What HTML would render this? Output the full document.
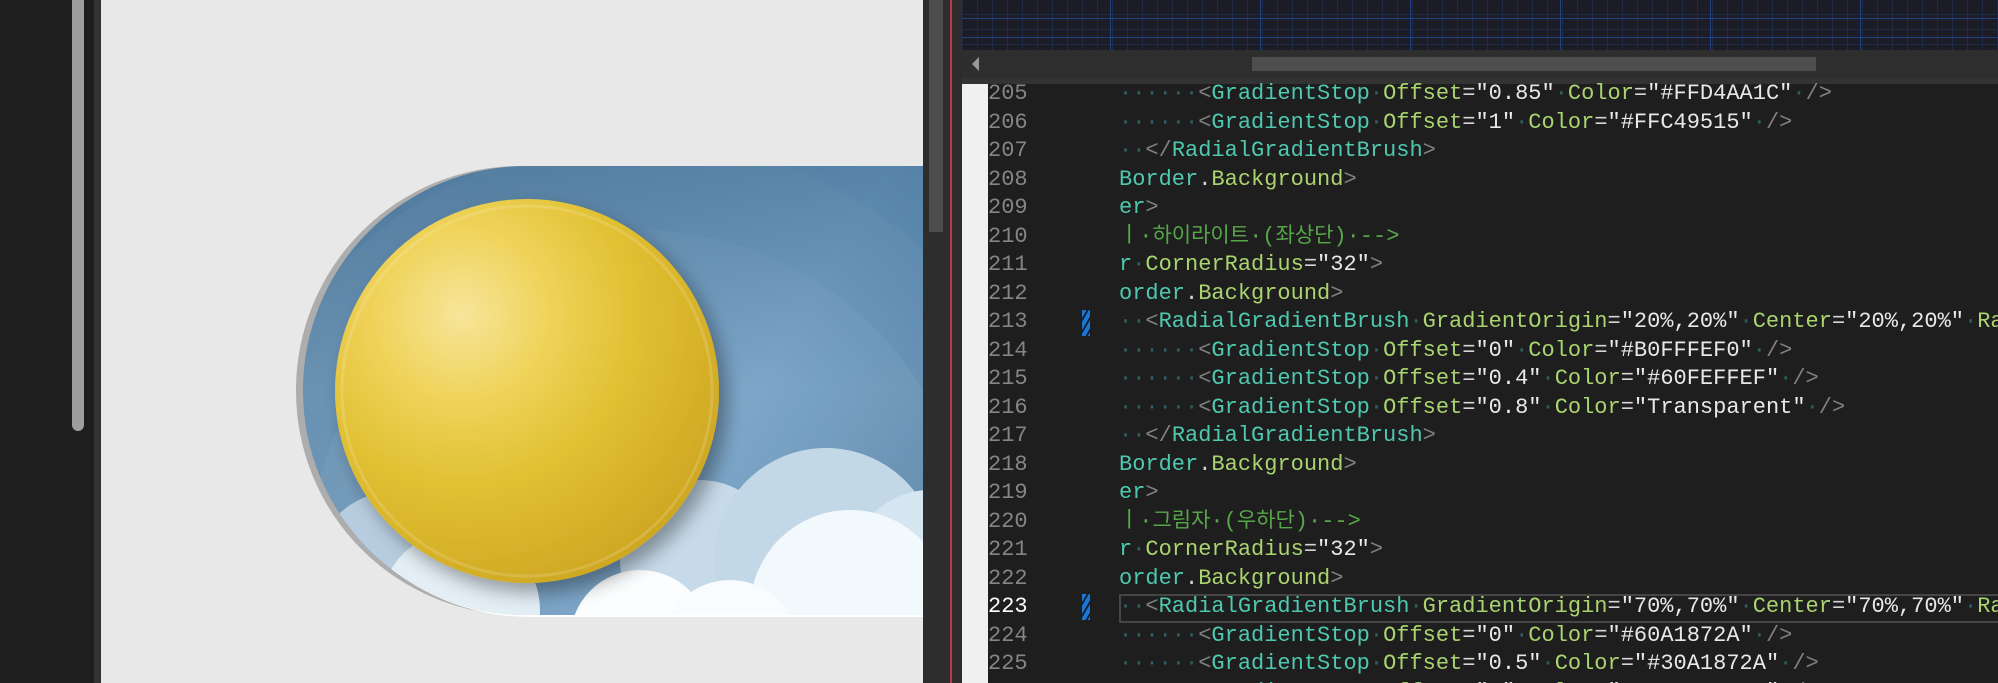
<!DOCTYPE html>
<html><head><meta charset="utf-8"><style>
*{margin:0;padding:0;box-sizing:border-box}
html,body{width:1998px;height:683px;overflow:hidden}
body{background:#1e1e1e;position:relative;font-family:"Liberation Mono","Noto Sans CJK KR",monospace}
.a{position:absolute}
.code{position:absolute;left:1119px;top:80px;font-size:22px;color:#d4d4d4}
.code div,.ln div{height:28.5px;line-height:28.5px;white-space:pre}
.ln{position:absolute;left:988px;top:80px;font-size:22px;color:#858585}
.d{color:#2c6165}.t{color:#4ec9b0}.at{color:#a9d46f}.p{color:#808080}.s{color:#e8e8e8}.c{color:#57a64a}
.k{font-family:"Noto Sans CJK KR",sans-serif;font-size:21px;line-height:1}
</style></head><body>
<div class="a" style="left:0;top:0;width:94px;height:683px;background:#1e1e1e"></div>
<div class="a" style="left:72px;top:0;width:12px;height:431px;background:#9e9e9e;border-radius:0 0 6px 6px"></div>
<div class="a" style="left:94px;top:0;width:7px;height:683px;background:#333"></div>
<div class="a" style="left:101px;top:0;width:822px;height:683px;background:#e8e8e8"></div>
<svg class="a" style="left:0;top:0" width="923" height="683">
<defs>
<linearGradient id="bg" x1="0" y1="0" x2="1" y2="0.3">
<stop offset="0" stop-color="#5e87a8"/><stop offset="0.6" stop-color="#6f9dc3"/><stop offset="1" stop-color="#4a7699"/></linearGradient>
<linearGradient id="tp" x1="0" y1="0" x2="0" y2="1"><stop offset="0" stop-color="#3f6a8d" stop-opacity=".5"/><stop offset="0.5" stop-color="#3f6a8d" stop-opacity="0"/></linearGradient>
<radialGradient id="sun" cx="0.33" cy="0.3" r="0.75">
<stop offset="0" stop-color="#f7e59a"/><stop offset="0.3" stop-color="#efd35a"/><stop offset="0.6" stop-color="#e1c032"/><stop offset="1" stop-color="#cfa823"/></radialGradient>
<clipPath id="cl"><rect x="303" y="166" width="900" height="449" rx="224" ry="224"/></clipPath>
<filter id="sh" x="-20%" y="-20%" width="150%" height="150%"><feDropShadow dx="8" dy="10" stdDeviation="9" flood-color="#000" flood-opacity=".35"/></filter>
</defs>
<rect x="296" y="166" width="900" height="449" rx="224" ry="224" fill="#adadad"/>
<rect x="306" y="170" width="900" height="447" rx="224" ry="224" fill="#fff"/>
<g clip-path="url(#cl)">
<rect x="303" y="166" width="900" height="449" fill="url(#bg)"/>
<circle cx="640" cy="560" r="420" fill="#fff" opacity=".05"/>
<circle cx="640" cy="560" r="330" fill="#fff" opacity=".05"/>
<rect x="303" y="166" width="900" height="449" fill="url(#tp)"/>
<circle cx="400" cy="580" r="90" fill="#b7cddf"/>
<circle cx="700" cy="560" r="80" fill="#c6dae9"/>
<circle cx="826" cy="560" r="112" fill="#c3d8e7"/>
<circle cx="930" cy="570" r="80" fill="#d5e6f0"/>
<circle cx="850" cy="610" r="100" fill="#f2f9fc"/>
<circle cx="460" cy="610" r="80" fill="#e3eef5"/>
<circle cx="640" cy="640" r="70" fill="#fbfdfe"/>
<circle cx="730" cy="650" r="70" fill="#f8fcfe"/>
</g>
<circle cx="527" cy="391" r="192" fill="url(#sun)" filter="url(#sh)"/>
<circle cx="527" cy="391" r="185" fill="none" stroke="#fff" stroke-opacity=".15" stroke-width="3"/>
</svg>
<div class="a" style="left:923px;top:0;width:39px;height:683px;background:#2d2d2d"></div>
<div class="a" style="left:929px;top:0;width:14px;height:232px;background:#4d4d4d"></div>
<div class="a" style="left:950px;top:0;width:2px;height:683px;background:#b9384a"></div>
<div class="a" style="left:962px;top:0;width:1036px;height:50px;background-color:#1b1c26;background-image:linear-gradient(90deg,#23407f 1px,transparent 1px),linear-gradient(0deg,#23407f 1px,transparent 1px),linear-gradient(90deg,#1f2a45 1px,transparent 1px),linear-gradient(0deg,#1f2a45 1px,transparent 1px);background-size:150px 150px,150px 19px,15px 15px,15px 15px;background-position:-2px 0,0 0,0 0,0 0"></div>
<div class="a" style="left:962px;top:50px;width:1036px;height:28px;background:#2e2e2e"></div>
<div class="a" style="left:972px;top:57px;width:0;height:0;border-top:7px solid transparent;border-bottom:7px solid transparent;border-right:7px solid #999"></div>
<div class="a" style="left:1252px;top:57px;width:564px;height:14px;background:#4e4e4e"></div>
<div class="a" style="left:962px;top:78px;width:1036px;height:6px;background:#333"></div>
<div class="a" style="left:962px;top:84px;width:26px;height:599px;background:#f0f0f0"></div>
<div class="a" style="left:1082px;top:310px;width:8px;height:26px;background:repeating-linear-gradient(120deg,#1a78d0 0 4px,#0b2440 4px 6px)"></div>
<div class="a" style="left:1082px;top:594px;width:8px;height:26px;background:repeating-linear-gradient(120deg,#1a78d0 0 4px,#0b2440 4px 6px)"></div>
<div class="a" style="left:1119px;top:594px;width:900px;height:29px;border:2px solid #464646"></div>
<div class="ln"><div>205</div><div>206</div><div>207</div><div>208</div><div>209</div><div>210</div><div>211</div><div>212</div><div>213</div><div>214</div><div>215</div><div>216</div><div>217</div><div>218</div><div>219</div><div>220</div><div>221</div><div>222</div><div style="color:#fff">223</div><div>224</div><div>225</div><div>226</div></div>
<div class="code"><div><span class="d">······</span><span class="p">&lt;</span><span class="t">GradientStop</span><span class="d">·</span><span class="at">Offset</span>=<span class="s">"0.85"</span><span class="d">·</span><span class="at">Color</span>=<span class="s">"#FFD4AA1C"</span><span class="d">·</span><span class="p">/&gt;</span></div><div><span class="d">······</span><span class="p">&lt;</span><span class="t">GradientStop</span><span class="d">·</span><span class="at">Offset</span>=<span class="s">"1"</span><span class="d">·</span><span class="at">Color</span>=<span class="s">"#FFC49515"</span><span class="d">·</span><span class="p">/&gt;</span></div><div><span class="d">··</span><span class="p">&lt;/</span><span class="t">RadialGradientBrush</span><span class="p">&gt;</span></div><div><span class="t">Border</span>.<span class="at">Background</span><span class="p">&gt;</span></div><div><span class="t">er</span><span class="p">&gt;</span></div><div><span class="c">ㅣ·<span class="k">하이라이트</span>·(<span class="k">좌상단</span>)·--&gt;</span></div><div><span class="t">r</span><span class="d">·</span><span class="at">CornerRadius</span>=<span class="s">"32"</span><span class="p">&gt;</span></div><div><span class="t">order</span>.<span class="at">Background</span><span class="p">&gt;</span></div><div><span class="d">··</span><span class="p">&lt;</span><span class="t">RadialGradientBrush</span><span class="d">·</span><span class="at">GradientOrigin</span>=<span class="s">"20%,20%"</span><span class="d">·</span><span class="at">Center</span>=<span class="s">"20%,20%"</span><span class="d">·</span><span class="at">Ra</span></div><div><span class="d">······</span><span class="p">&lt;</span><span class="t">GradientStop</span><span class="d">·</span><span class="at">Offset</span>=<span class="s">"0"</span><span class="d">·</span><span class="at">Color</span>=<span class="s">"#B0FFFEF0"</span><span class="d">·</span><span class="p">/&gt;</span></div><div><span class="d">······</span><span class="p">&lt;</span><span class="t">GradientStop</span><span class="d">·</span><span class="at">Offset</span>=<span class="s">"0.4"</span><span class="d">·</span><span class="at">Color</span>=<span class="s">"#60FEFFEF"</span><span class="d">·</span><span class="p">/&gt;</span></div><div><span class="d">······</span><span class="p">&lt;</span><span class="t">GradientStop</span><span class="d">·</span><span class="at">Offset</span>=<span class="s">"0.8"</span><span class="d">·</span><span class="at">Color</span>=<span class="s">"Transparent"</span><span class="d">·</span><span class="p">/&gt;</span></div><div><span class="d">··</span><span class="p">&lt;/</span><span class="t">RadialGradientBrush</span><span class="p">&gt;</span></div><div><span class="t">Border</span>.<span class="at">Background</span><span class="p">&gt;</span></div><div><span class="t">er</span><span class="p">&gt;</span></div><div><span class="c">ㅣ·<span class="k">그림자</span>·(<span class="k">우하단</span>)·--&gt;</span></div><div><span class="t">r</span><span class="d">·</span><span class="at">CornerRadius</span>=<span class="s">"32"</span><span class="p">&gt;</span></div><div><span class="t">order</span>.<span class="at">Background</span><span class="p">&gt;</span></div><div><span class="d">··</span><span class="p">&lt;</span><span class="t">RadialGradientBrush</span><span class="d">·</span><span class="at">GradientOrigin</span>=<span class="s">"70%,70%"</span><span class="d">·</span><span class="at">Center</span>=<span class="s">"70%,70%"</span><span class="d">·</span><span class="at">Ra</span></div><div><span class="d">······</span><span class="p">&lt;</span><span class="t">GradientStop</span><span class="d">·</span><span class="at">Offset</span>=<span class="s">"0"</span><span class="d">·</span><span class="at">Color</span>=<span class="s">"#60A1872A"</span><span class="d">·</span><span class="p">/&gt;</span></div><div><span class="d">······</span><span class="p">&lt;</span><span class="t">GradientStop</span><span class="d">·</span><span class="at">Offset</span>=<span class="s">"0.5"</span><span class="d">·</span><span class="at">Color</span>=<span class="s">"#30A1872A"</span><span class="d">·</span><span class="p">/&gt;</span></div><div><span class="d">······</span><span class="p">&lt;</span><span class="t">GradientStop</span><span class="d">·</span><span class="at">Offset</span>=<span class="s">"1"</span><span class="d">·</span><span class="at">Color</span>=<span class="s">"Transparent"</span><span class="d">·</span><span class="p">/&gt;</span></div></div>
</body></html>
